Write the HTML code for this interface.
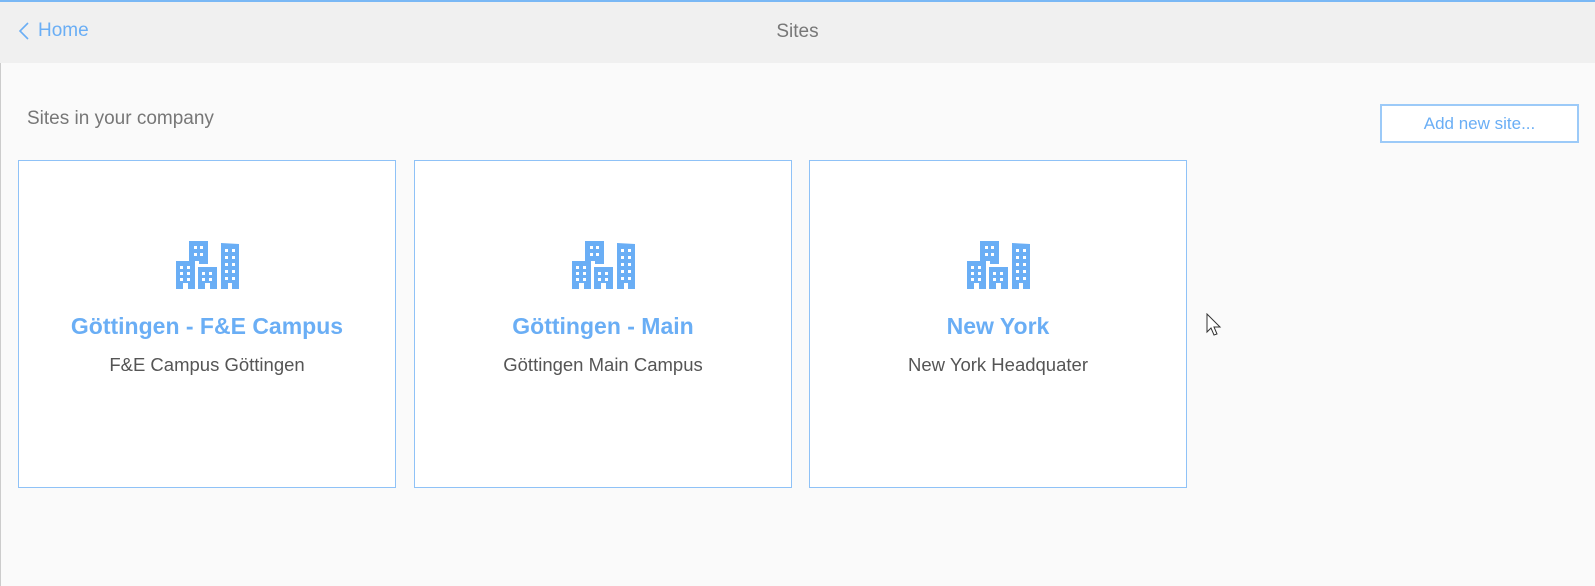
<!DOCTYPE html>
<html><head><meta charset="utf-8"><style>
body{margin:0;width:1595px;height:586px;background:#fafafa;font-family:"Liberation Sans",sans-serif;position:relative;overflow:hidden}
.top{position:absolute;left:0;top:0;width:1595px;height:2px;background:#7ab8f5}
.hdr{position:absolute;left:0;top:2px;width:1595px;height:61px;background:#f0f0f0}
.lb{position:absolute;left:0;top:63px;width:1px;height:523px;background:#ccc}
.home{position:absolute;left:38px;top:20px;font-size:19px;color:#6aaef5}
.chev{position:absolute;left:18px;top:21px}
.title{position:absolute;left:0;width:1595px;top:21px;text-align:center;font-size:19px;color:#777}
.sub{position:absolute;left:27px;top:108px;font-size:19px;color:#777}
.btn{position:absolute;left:1380px;top:104px;width:195px;height:35px;border:2px solid #9ccaf8;background:#fff;color:#6aaef5;font-size:17px;text-align:center;line-height:35px}
.card{position:absolute;top:160px;width:376px;height:326px;border:1px solid #8fc2f7;background:#fff;text-align:center}
.card svg{position:absolute;left:157px;top:80px}
.card h2{position:absolute;left:0;right:0;top:152px;margin:0;font-size:23px;color:#6aaef5;font-weight:bold}
.card p{position:absolute;left:0;right:0;top:193px;margin:0;font-size:18.5px;color:#555}
</style></head><body>
<div class="top"></div><div class="hdr"></div><div class="lb"></div>
<svg class="chev" width="12" height="20"><path d="M10 2 L2 10 L10 18" fill="none" stroke="#6aaef5" stroke-width="1.6"/></svg>
<div class="home">Home</div>
<div class="title">Sites</div>
<div class="sub">Sites in your company</div>
<div class="btn">Add new site...</div>
<div class="card" style="left:18px"><svg width="64" height="48" viewBox="0 0 64 48"><g fill="#6aaef5"><path d="M0 20h19v28h-7v-6h-5v6H0z"/><path d="M13 0h19v23h-9v-3h-10z"/><path d="M22 26h19v22h-7v-6h-5v6h-7z"/><path d="M45 2l18 1v45h-7v-6h-4v6h-7z"/></g><g fill="#fff"><rect x="4" y="25" width="3" height="3"/><rect x="11" y="25" width="3" height="3"/><rect x="4" y="31" width="3" height="3"/><rect x="11" y="31" width="3" height="3"/><rect x="4" y="37" width="3" height="3"/><rect x="11" y="37" width="3" height="3"/><rect x="18" y="5" width="3" height="3"/><rect x="24" y="5" width="3" height="3"/><rect x="18" y="12" width="3" height="3"/><rect x="24" y="12" width="3" height="3"/><rect x="26" y="31" width="3" height="3"/><rect x="33" y="31" width="3" height="3"/><rect x="26" y="37" width="3" height="3"/><rect x="33" y="37" width="3" height="3"/><rect x="49" y="8" width="3" height="3"/><rect x="56" y="8" width="3" height="3"/><rect x="49" y="15" width="3" height="3"/><rect x="56" y="15" width="3" height="3"/><rect x="49" y="22" width="3" height="3"/><rect x="56" y="22" width="3" height="3"/><rect x="49" y="29" width="3" height="3"/><rect x="56" y="29" width="3" height="3"/><rect x="49" y="36" width="3" height="3"/><rect x="56" y="36" width="3" height="3"/></g></svg><h2>Göttingen - F&amp;E Campus</h2><p>F&amp;E Campus Göttingen</p></div>
<div class="card" style="left:414px"><svg width="64" height="48" viewBox="0 0 64 48"><g fill="#6aaef5"><path d="M0 20h19v28h-7v-6h-5v6H0z"/><path d="M13 0h19v23h-9v-3h-10z"/><path d="M22 26h19v22h-7v-6h-5v6h-7z"/><path d="M45 2l18 1v45h-7v-6h-4v6h-7z"/></g><g fill="#fff"><rect x="4" y="25" width="3" height="3"/><rect x="11" y="25" width="3" height="3"/><rect x="4" y="31" width="3" height="3"/><rect x="11" y="31" width="3" height="3"/><rect x="4" y="37" width="3" height="3"/><rect x="11" y="37" width="3" height="3"/><rect x="18" y="5" width="3" height="3"/><rect x="24" y="5" width="3" height="3"/><rect x="18" y="12" width="3" height="3"/><rect x="24" y="12" width="3" height="3"/><rect x="26" y="31" width="3" height="3"/><rect x="33" y="31" width="3" height="3"/><rect x="26" y="37" width="3" height="3"/><rect x="33" y="37" width="3" height="3"/><rect x="49" y="8" width="3" height="3"/><rect x="56" y="8" width="3" height="3"/><rect x="49" y="15" width="3" height="3"/><rect x="56" y="15" width="3" height="3"/><rect x="49" y="22" width="3" height="3"/><rect x="56" y="22" width="3" height="3"/><rect x="49" y="29" width="3" height="3"/><rect x="56" y="29" width="3" height="3"/><rect x="49" y="36" width="3" height="3"/><rect x="56" y="36" width="3" height="3"/></g></svg><h2>Göttingen - Main</h2><p>Göttingen Main Campus</p></div>
<div class="card" style="left:809px"><svg width="64" height="48" viewBox="0 0 64 48"><g fill="#6aaef5"><path d="M0 20h19v28h-7v-6h-5v6H0z"/><path d="M13 0h19v23h-9v-3h-10z"/><path d="M22 26h19v22h-7v-6h-5v6h-7z"/><path d="M45 2l18 1v45h-7v-6h-4v6h-7z"/></g><g fill="#fff"><rect x="4" y="25" width="3" height="3"/><rect x="11" y="25" width="3" height="3"/><rect x="4" y="31" width="3" height="3"/><rect x="11" y="31" width="3" height="3"/><rect x="4" y="37" width="3" height="3"/><rect x="11" y="37" width="3" height="3"/><rect x="18" y="5" width="3" height="3"/><rect x="24" y="5" width="3" height="3"/><rect x="18" y="12" width="3" height="3"/><rect x="24" y="12" width="3" height="3"/><rect x="26" y="31" width="3" height="3"/><rect x="33" y="31" width="3" height="3"/><rect x="26" y="37" width="3" height="3"/><rect x="33" y="37" width="3" height="3"/><rect x="49" y="8" width="3" height="3"/><rect x="56" y="8" width="3" height="3"/><rect x="49" y="15" width="3" height="3"/><rect x="56" y="15" width="3" height="3"/><rect x="49" y="22" width="3" height="3"/><rect x="56" y="22" width="3" height="3"/><rect x="49" y="29" width="3" height="3"/><rect x="56" y="29" width="3" height="3"/><rect x="49" y="36" width="3" height="3"/><rect x="56" y="36" width="3" height="3"/></g></svg><h2>New York</h2><p>New York Headquater</p></div>
<svg style="position:absolute;left:1206px;top:313px" width="16" height="24"><path d="M1 1 L1 19 L5 15 L8 22 L11 21 L8 14 L14 14 Z" fill="#fff" stroke="#333" stroke-width="1"/></svg>
</body></html>
